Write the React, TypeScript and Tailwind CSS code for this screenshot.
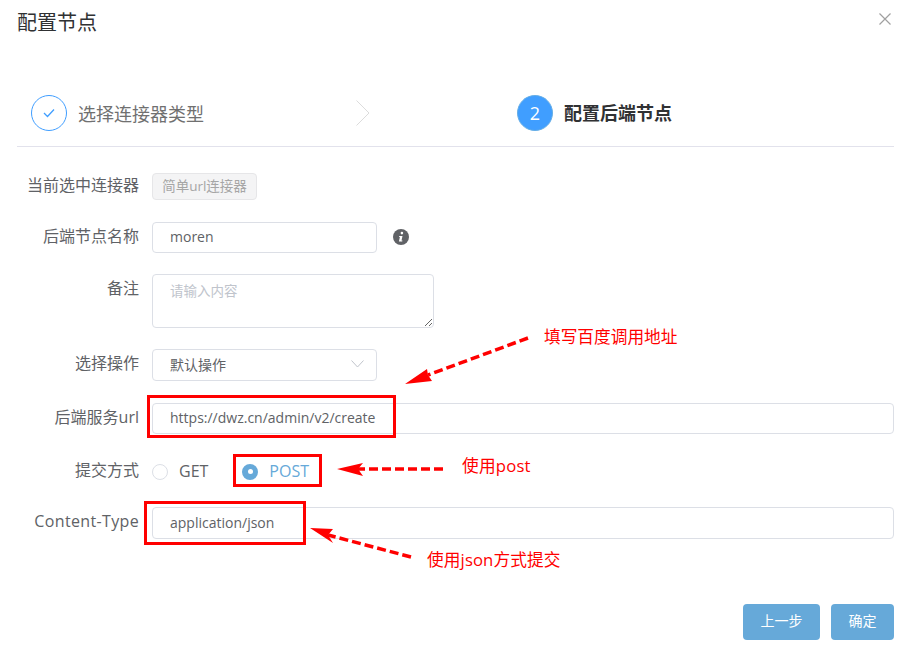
import React from "react";

const font = { fontFamily: '"Open Sans","Noto Sans CJK SC",sans-serif' };

function Row({ label, className, labelClass = "", children }: { label: string; className: string; labelClass?: string; children: React.ReactNode }) {
  return (
    <div className={`flex ${className}`}>
      <div className={`w-[122px] shrink-0 text-right text-[16px] text-[#606266] leading-[29px] whitespace-nowrap ${labelClass}`}>{label}</div>
      <div className="ml-[13px] flex flex-1 items-center">{children}</div>
    </div>
  );
}

function Field({ text, className }: { text: string; className: string }) {
  return (
    <div className={`flex h-[31px] items-center rounded-[4px] border border-[#dcdfe6] bg-white pb-[2px] pl-[17px] text-[14px] text-[#606266] ${className}`}>
      {text}
    </div>
  );
}

export default function App() {
  return (
    <div className="relative h-[653px] w-[901px] overflow-hidden bg-white" style={font}>
      <div className="flex h-[45px] items-center justify-between pl-[17px] pr-[10px]">
        <div className="text-[20px] leading-[28px] text-[#303133]">配置节点</div>
        <svg width="12" height="12" viewBox="0 0 12 12" className="mb-[8px]">
          <path d="M0.5 0.5L11.5 11.5M11.5 0.5L0.5 11.5" stroke="#a0a0a0" strokeWidth="1.2" fill="none" />
        </svg>
      </div>

      <div className="ml-[17px] mr-[7px] mt-[50px] flex h-[52px] border-b border-[#e2e2ec] pl-[14px]">
        <div className="flex h-[36px] w-[486px] items-center">
          <div className="flex h-[36px] w-[36px] items-center justify-center rounded-full border border-[#409eff]">
            <svg width="12" height="10" viewBox="0 0 12 10">
              <path d="M1 5L4.5 8.5L11 1.5" stroke="#409eff" strokeWidth="1.3" fill="none" />
            </svg>
          </div>
          <div className="ml-[11px] pt-[2px] text-[18px] text-[#707070]">选择连接器类型</div>
          <svg width="14" height="26" viewBox="0 0 14 26" className="ml-[152px]">
            <path d="M0.5 0.5L13 13L0.5 25.5" stroke="#dcdcdc" strokeWidth="1" fill="none" />
          </svg>
        </div>
        <div className="flex h-[36px] items-center">
          <div className="flex h-[36px] w-[36px] items-center justify-center rounded-full border border-[#65aee6] bg-[#409eff] text-[18px] text-white">2</div>
          <div className="ml-[11px] text-[18px] font-bold text-[#303133]">配置后端节点</div>
        </div>
      </div>

      <div className="pl-[17px] pr-[7px]">
        <Row label="当前选中连接器" className="mt-[24px] h-[31px]">
          <div className="flex h-[27px] w-[105px] items-center justify-center rounded-[4px] border border-[#e6e6e8] bg-[#f4f4f5] text-[13.5px] text-[#a6a6a6]">简单url连接器</div>
        </Row>
        <Row label="后端节点名称" className="mt-[20px] h-[31px]">
          <Field text="moren" className="w-[225px]" />
          <svg width="16" height="16" viewBox="0 0 16 16" className="ml-[16px] mb-[1px]">
            <circle cx="8" cy="8" r="8" fill="#606266" />
            <circle cx="8.9" cy="4.1" r="1.3" fill="#fff" />
            <path d="M6.3 7h3.2l-1 4.4h1l-.3 1.1H5.9l1-4.4h-.9z" fill="#fff" />
          </svg>
        </Row>
        <Row label="备注" className="mt-[21px] h-[54px]">
          <textarea
            readOnly
            placeholder="请输入内容"
            className="h-[54px] w-[282px] resize rounded-[4px] border border-[#dcdfe6] bg-white px-[17px] py-[6px] text-[13.5px] leading-[20px] outline-none placeholder:text-[#c0c4cc]"
            style={font}
          />
        </Row>
        <Row label="选择操作" className="mt-[21px] h-[32px]">
          <div className="flex h-[32px] w-[225px] items-center justify-between rounded-[4px] border border-[#dcdfe6] pb-[2px] pl-[17px] pr-[12px] text-[14px] text-[#606266]">
            默认操作
            <svg width="13" height="8" viewBox="0 0 13 8">
              <path d="M0.5 0.5L6.5 7L12.5 0.5" stroke="#c0c4cc" strokeWidth="1" fill="none" />
            </svg>
          </div>
        </Row>
        <Row label="后端服务url" className="mt-[22px] h-[31px]">
          <Field text="https://dwz.cn/admin/v2/create" className="w-full" />
        </Row>
        <Row label="提交方式" className="mt-[22px] h-[31px]">
          <div className="h-[16px] w-[16px] rounded-full border border-[#dcdfe6]" />
          <span className="ml-[11px] pb-[2px] text-[16px] text-[#606266]">GET</span>
          <div className="ml-[34px] flex h-[16px] w-[16px] items-center justify-center rounded-full bg-[#66a9d9]">
            <div className="h-[5px] w-[5px] rounded-full bg-white" />
          </div>
          <span className="ml-[11px] pb-[2px] text-[16px] text-[#66a9d9]">POST</span>
        </Row>
        <Row label="Content-Type" className="mt-[20px] h-[32px]" labelClass="tracking-[0.35px]">
          <Field text="application/json" className="h-[32px] w-full" />
        </Row>
        <div className="mt-[65px] flex justify-end gap-[11px]">
          <div className="flex h-[36px] w-[77px] items-center justify-center rounded-[4px] bg-[#66a9d9] pb-[4px] text-[14px] text-white">上一步</div>
          <div className="flex h-[36px] w-[63px] items-center justify-center rounded-[4px] bg-[#66a9d9] pb-[4px] text-[14px] text-white">确定</div>
        </div>
      </div>

      {/* Red annotations drawn over the form */}
      <div className="absolute left-[147px] top-[395px] h-[43px] w-[249px] border-[3px] border-[#ff0000]" />
      <div className="absolute left-[233px] top-[454px] h-[33px] w-[89px] border-[3px] border-[#ff0000]" />
      <div className="absolute left-[144px] top-[501px] h-[44px] w-[162px] border-[3px] border-[#ff0000]" />
      <svg className="absolute left-0 top-0" width="901" height="653" viewBox="0 0 901 653">
        <g fill="none" stroke="#ff0000" strokeWidth="3.5" strokeDasharray="9 4">
          <path d="M528 338L428 375" />
          <path d="M443 469L358 469" />
          <path d="M411 557L328 535" />
        </g>
        <g fill="#ff0000">
          <path d="M405 384L427 369L428 375L432 381Z" />
          <path d="M337 469L363 463L358 469L363 476Z" />
          <path d="M310 528L333 529L328 535L333 543Z" />
        </g>
      </svg>
      <div className="absolute left-[544px] top-[325px] text-[16.7px] leading-[24px] text-[#ff0000]">填写百度调用地址</div>
      <div className="absolute left-[462px] top-[454px] text-[16.7px] leading-[24px] tracking-[0.2px] text-[#ff0000]">使用post</div>
      <div className="absolute left-[427px] top-[548px] text-[16.7px] leading-[24px] tracking-[0.1px] text-[#ff0000]">使用json方式提交</div>
    </div>
  );
}
